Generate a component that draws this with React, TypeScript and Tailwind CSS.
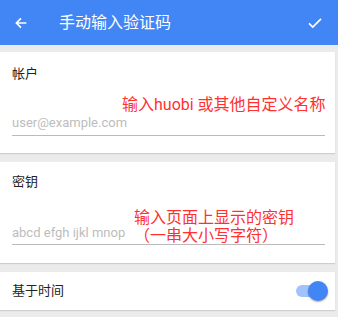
import React from 'react';

const font = { fontFamily: 'Roboto, "Noto Sans CJK SC", sans-serif' };

export default function App() {
  return (
    <div className="w-[338px] h-[317px] bg-[#ebebeb] overflow-hidden relative" style={font}>
      <header className="h-[45px] bg-[#4285f4] flex items-center text-white">
        <svg width="16" height="16" viewBox="0 0 24 24" className="ml-[13px]" fill="none" stroke="white" strokeWidth="2.4">
          <path d="M20 12H5M12 5l-7 7 7 7" />
        </svg>
        <h1 className="ml-[30px] text-[16px] leading-none">手动输入验证码</h1>
        <svg width="18" height="18" viewBox="0 0 24 24" className="ml-auto mr-[14px]" fill="none" stroke="white" strokeWidth="2.2">
          <path d="M4 12.5l5 5L20 6.5" />
        </svg>
      </header>

      <div className="w-[335px] flex flex-col gap-[9px] pt-[7px]">
        <section className="bg-white h-[101px] px-[12px] pt-[12px] shadow-[0_1px_1px_rgba(0,0,0,0.12)] relative">
          <div className="text-[13px] text-[#222]">帐户</div>
          <div className="mt-[29px] text-[13px] text-[#bdbdbd] pb-[3px] border-b border-[#bbb] w-[313px]">user@example.com</div>
          <div className="absolute left-[122px] top-[41px] text-[16px] text-[#ff3030] whitespace-nowrap">输入huobi 或其他自定义名称</div>
        </section>

        <section className="bg-white h-[101px] px-[12px] pt-[10px] shadow-[0_1px_1px_rgba(0,0,0,0.12)] relative">
          <div className="text-[13px] text-[#222]">密钥</div>
          <div className="mt-[31px] text-[13px] text-[#bdbdbd] pb-[2px] border-b border-[#bbb] w-[313px]">abcd efgh ijkl mnop</div>
          <div className="absolute left-[134px] top-[47px] text-[16px] leading-[18px] text-[#ff3030] whitespace-nowrap">
            <div>输入页面上显示的密钥</div>
            <div>（一串大小写字符）</div>
          </div>
        </section>

        <section className="bg-white h-[38px] px-[12px] flex items-center justify-between shadow-[0_1px_1px_rgba(0,0,0,0.12)]">
          <span className="text-[13px] text-[#222]">基于时间</span>
          <div className="relative w-[30px] h-[16px] mr-[-3px]">
            <div className="absolute left-0 right-[2px] top-[2px] h-[12px] rounded-full bg-[#a1c2fa]" />
            <div className="absolute right-[-2px] top-[-2px] w-[20px] h-[20px] rounded-full bg-[#4285f4] shadow-[0_1px_2px_rgba(0,0,0,0.35)]" />
          </div>
        </section>
      </div>
    </div>
  );
}
